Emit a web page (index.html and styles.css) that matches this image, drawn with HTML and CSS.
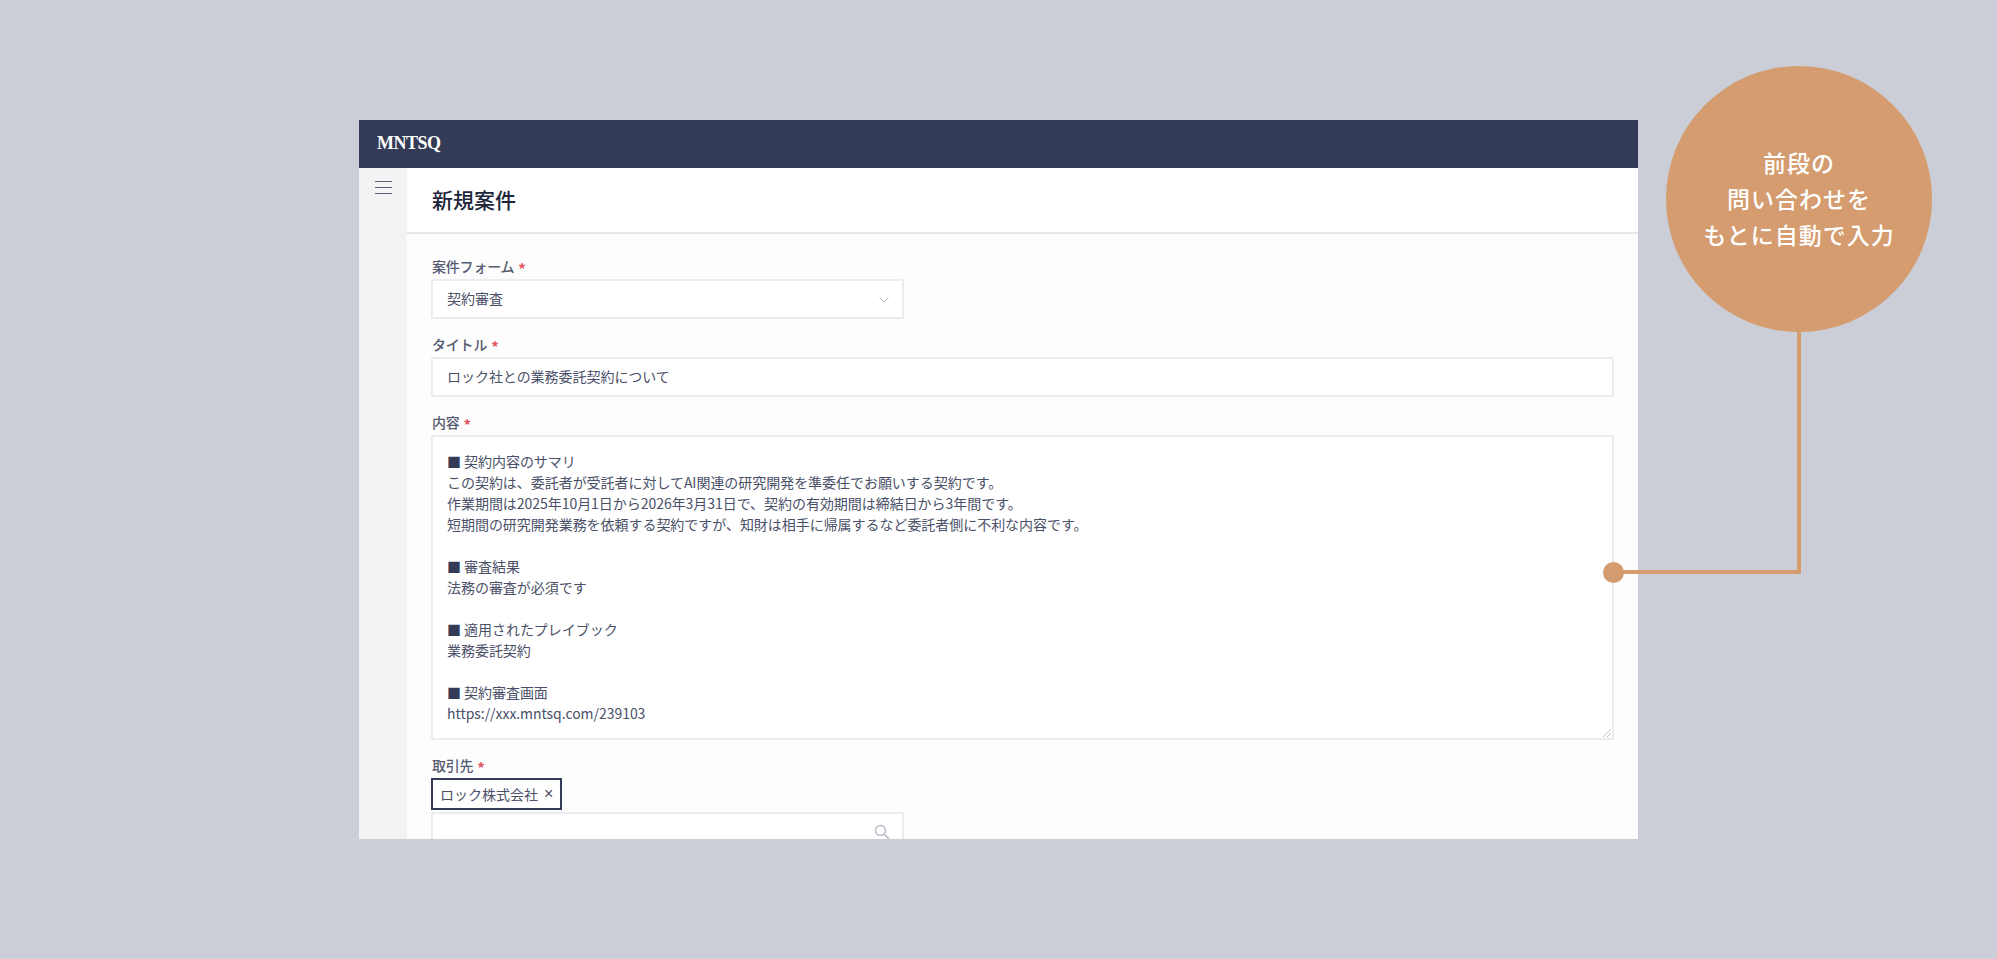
FILE: index.html
```html
<!DOCTYPE html>
<html lang="ja">
<head>
<meta charset="utf-8">
<title>MNTSQ 新規案件</title>
<link rel="stylesheet" href="styles.css">
</head>
<body>
<div class="stage">
  <div class="window">
    <header class="topbar"><span class="logo">MNTSQ</span></header>
    <div class="body">
      <aside class="sidebar">
        <svg class="menu" width="17" height="13" viewBox="0 0 17 13"><path d="M0 .5h17M0 6.500h17M0 12.500h17" stroke="#5c6379" stroke-width="1" fill="none"/></svg>
      </aside>
      <main class="main">
        <div class="pagehead"><h1>新規案件</h1></div>
        <form class="form">
          <div class="field">
            <div class="label">案件フォーム <span class="req">*</span></div>
            <div class="control narrow">契約審査
              <svg class="chev" width="10" height="6" viewBox="0 0 10 6"><path d="M.5.5 5 5 9.500.5" stroke="#b9bcc6" fill="none"/></svg>
            </div>
          </div>
          <div class="field">
            <div class="label">タイトル <span class="req">*</span></div>
            <div class="control">ロック社との業務委託契約について</div>
          </div>
          <div class="field">
            <div class="label">内容 <span class="req">*</span></div>
            <div class="textarea">
              <p><span class="sq">■</span> 契約内容のサマリ</p>
              <p>この契約は、委託者が受託者に対してAI関連の研究開発を準委任でお願いする契約です。</p>
              <p>作業期間は2025年10月1日から2026年3月31日で、契約の有効期間は締結日から3年間です。</p>
              <p>短期間の研究開発業務を依頼する契約ですが、知財は相手に帰属するなど委託者側に不利な内容です。</p>
              <p>&nbsp;</p>
              <p><span class="sq">■</span> 審査結果</p>
              <p>法務の審査が必須です</p>
              <p>&nbsp;</p>
              <p><span class="sq">■</span> 適用されたプレイブック</p>
              <p>業務委託契約</p>
              <p>&nbsp;</p>
              <p><span class="sq">■</span> 契約審査画面</p>
              <p>https://xxx.mntsq.com/239103</p>
              <svg class="grip" width="8" height="8" viewBox="0 0 8 8"><path d="M0 8 8 0M4 8 8 4" stroke="#c4c6cc" fill="none"/></svg>
            </div>
          </div>
          <div class="field">
            <div class="label">取引先 <span class="req">*</span></div>
            <div class="tag">ロック株式会社<span class="tagx">×</span></div>
            <div class="control narrow search">
              <svg class="lens" width="16" height="16" viewBox="0 0 16 16"><circle cx="6.500" cy="6.500" r="5" stroke="#b9bcc6" stroke-width="1.400" fill="none"/><path d="M10.200 10.200 15 15" stroke="#b9bcc6" stroke-width="1.600" fill="none"/></svg>
            </div>
          </div>
        </form>
      </main>
    </div>
  </div>
  <div class="bubble">前段の<br>問い合わせを<br>もとに自動で入力</div>
  <div class="wire"></div>
  <div class="dot"></div>
</div>
</body>
</html>
```
FILE: styles.css
```css
* { box-sizing: border-box; }
html, body { margin: 0; height: 100%; }
body {
  background: #cbced7;
  font-family: "Noto Sans CJK JP", "Noto Sans", sans-serif;
  color: #4a5068;
  overflow: hidden;
}
.stage { position: relative; width: 1997px; height: 959px; padding: 120px 359px; }
.window { width: 1279px; height: 719px; overflow: hidden; display: flex; flex-direction: column; background: #fdfdfe; }
.topbar { height: 48px; flex: none; background: #333b56; display: flex; align-items: center; padding: 0 0 2px 18px; }
.logo { font-family: "Liberation Serif", serif; font-weight: 700; font-size: 18px; letter-spacing: -0.5px; color: #fff; }
.body { flex: 1; display: flex; min-height: 0; }
.sidebar { width: 48px; flex: none; background: #f3f3f4; display: flex; justify-content: center; align-items: flex-start; padding-top: 13px; }
.main { flex: 1; min-width: 0; }
.pagehead { height: 66px; background: #fff; border-bottom: 2px solid #e6e7ea; padding: 0 0 1px 25px; display: flex; align-items: center; }
h1 { margin: 0; font-size: 21px; font-weight: 500; color: #20263a; line-height: 1; }
.form { padding: 21px 24px 0; display: flex; flex-direction: column; gap: 14px; }
.label { font-size: 14px; font-weight: 500; letter-spacing: -0.2px; line-height: 23px; color: #555b70; height: 24px; padding-left: 1px; }
.req { color: #e2545c; font-size: 15px; font-weight: 700; line-height: 0; vertical-align: -3px; margin-left: 1px; }
.control { position: relative; height: 40px; background: #fff; border: 2px solid #ebecf0; border-radius: 2px; padding-left: 14px; font-size: 14px; letter-spacing: -0.04px; line-height: 35px; }
.narrow { width: 473px; }
.chev { position: absolute; right: 13px; top: 16px; }
.textarea { position: relative; height: 305px; background: #fff; border: 2px solid #ebecf0; border-radius: 2px; padding: 14px 14px; font-size: 14px; letter-spacing: -0.04px; line-height: 21px; }
.textarea p { margin: 0; }
.sq { color: #333b56; }
.grip { position: absolute; right: 1px; bottom: 1px; }
.tag { display: flex; width: 131px; align-items: center; height: 32px; border: 2px solid #333b56; background: #fff; padding: 0 6px 0 7px; font-size: 14px; white-space: nowrap; margin-bottom: 2px; }
.tagx { margin-left: 6px; font-family: "Liberation Sans", sans-serif; font-size: 16px; }
.search { height: 48px; }
.lens { position: absolute; right: 12px; top: 10px; }
.bubble { position: absolute; left: 1666px; top: 66px; width: 266px; height: 266px; padding-bottom: 2px; border-radius: 50%; background: #d49c6f; color: #fff; font-size: 23px; font-weight: 500; line-height: 36px; letter-spacing: 1px; display: flex; align-items: center; justify-content: center; text-align: center; }
.wire { position: absolute; left: 1622px; top: 331px; width: 179px; height: 243px; border-right: 4px solid #d49c6f; border-bottom: 4px solid #d49c6f; }
.dot { position: absolute; left: 1603px; top: 562px; width: 21px; height: 21px; border-radius: 50%; background: #d49c6f; }
```
